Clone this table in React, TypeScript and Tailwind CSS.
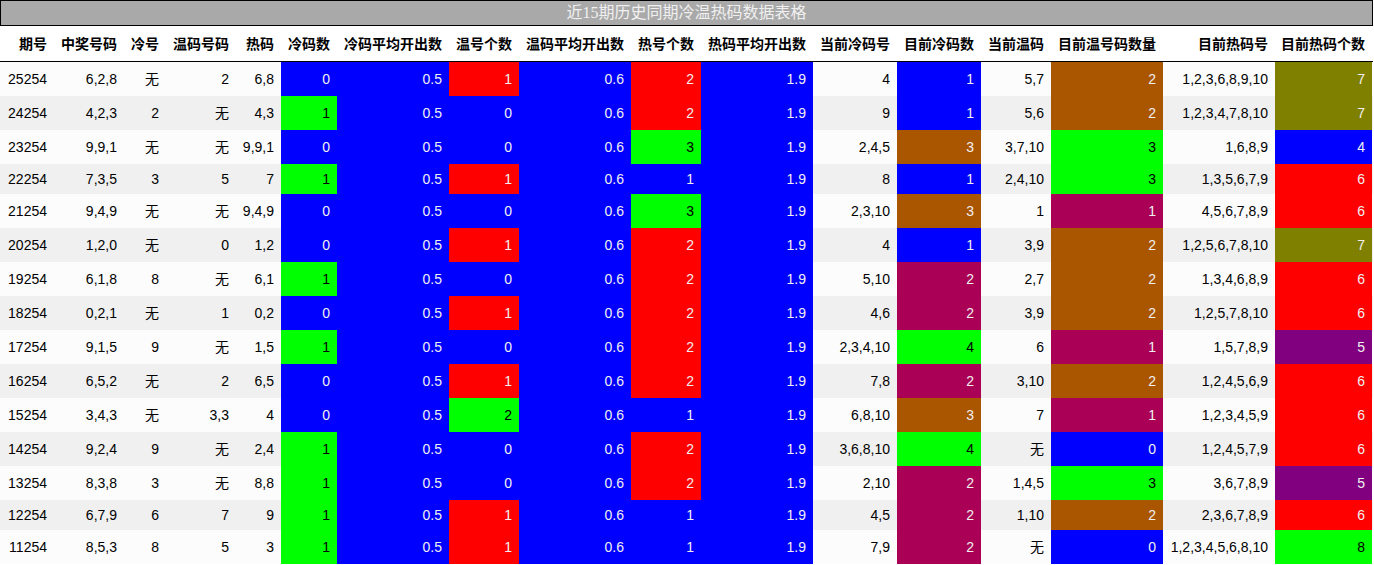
import React from "react";

const W = [54, 70, 42, 70, 45, 56, 112, 70, 112, 70, 112, 84, 84, 70, 112, 112, 97];

const HEAD = [
  "期号", "中奖号码", "冷号", "温码号码", "热码", "冷码数", "冷码平均开出数", "温号个数",
  "温码平均开出数", "热号个数", "热码平均开出数", "当前冷码号", "目前冷码数", "当前温码",
  "目前温号码数量", "目前热码号", "目前热码个数",
];

const B = "bg-[#0000ff] text-[#f0f0f0]";
const G = "bg-[#00ff00] text-black";
const R = "bg-[#ff0000] text-[#f0f0f0]";
const Br = "bg-[#aa5500] text-[#f0f0f0]";
const M = "bg-[#aa0055] text-[#f0f0f0]";
const O = "bg-[#808000] text-[#f0f0f0]";
const P = "bg-[#800080] text-[#f0f0f0]";

type Cell = [string, string?];

const ROWS: Cell[][] = [
  [["25254"], ["6,2,8"], ["无"], ["2"], ["6,8"], ["0", B], ["0.5", B], ["1", R], ["0.6", B], ["2", R], ["1.9", B], ["4"], ["1", B], ["5,7"], ["2", Br], ["1,2,3,6,8,9,10"], ["7", O]],
  [["24254"], ["4,2,3"], ["2"], ["无"], ["4,3"], ["1", G], ["0.5", B], ["0", B], ["0.6", B], ["2", R], ["1.9", B], ["9"], ["1", B], ["5,6"], ["2", Br], ["1,2,3,4,7,8,10"], ["7", O]],
  [["23254"], ["9,9,1"], ["无"], ["无"], ["9,9,1"], ["0", B], ["0.5", B], ["0", B], ["0.6", B], ["3", G], ["1.9", B], ["2,4,5"], ["3", Br], ["3,7,10"], ["3", G], ["1,6,8,9"], ["4", B]],
  [["22254"], ["7,3,5"], ["3"], ["5"], ["7"], ["1", G], ["0.5", B], ["1", R], ["0.6", B], ["1", B], ["1.9", B], ["8"], ["1", B], ["2,4,10"], ["3", G], ["1,3,5,6,7,9"], ["6", R]],
  [["21254"], ["9,4,9"], ["无"], ["无"], ["9,4,9"], ["0", B], ["0.5", B], ["0", B], ["0.6", B], ["3", G], ["1.9", B], ["2,3,10"], ["3", Br], ["1"], ["1", M], ["4,5,6,7,8,9"], ["6", R]],
  [["20254"], ["1,2,0"], ["无"], ["0"], ["1,2"], ["0", B], ["0.5", B], ["1", R], ["0.6", B], ["2", R], ["1.9", B], ["4"], ["1", B], ["3,9"], ["2", Br], ["1,2,5,6,7,8,10"], ["7", O]],
  [["19254"], ["6,1,8"], ["8"], ["无"], ["6,1"], ["1", G], ["0.5", B], ["0", B], ["0.6", B], ["2", R], ["1.9", B], ["5,10"], ["2", M], ["2,7"], ["2", Br], ["1,3,4,6,8,9"], ["6", R]],
  [["18254"], ["0,2,1"], ["无"], ["1"], ["0,2"], ["0", B], ["0.5", B], ["1", R], ["0.6", B], ["2", R], ["1.9", B], ["4,6"], ["2", M], ["3,9"], ["2", Br], ["1,2,5,7,8,10"], ["6", R]],
  [["17254"], ["9,1,5"], ["9"], ["无"], ["1,5"], ["1", G], ["0.5", B], ["0", B], ["0.6", B], ["2", R], ["1.9", B], ["2,3,4,10"], ["4", G], ["6"], ["1", M], ["1,5,7,8,9"], ["5", P]],
  [["16254"], ["6,5,2"], ["无"], ["2"], ["6,5"], ["0", B], ["0.5", B], ["1", R], ["0.6", B], ["2", R], ["1.9", B], ["7,8"], ["2", M], ["3,10"], ["2", Br], ["1,2,4,5,6,9"], ["6", R]],
  [["15254"], ["3,4,3"], ["无"], ["3,3"], ["4"], ["0", B], ["0.5", B], ["2", G], ["0.6", B], ["1", B], ["1.9", B], ["6,8,10"], ["3", Br], ["7"], ["1", M], ["1,2,3,4,5,9"], ["6", R]],
  [["14254"], ["9,2,4"], ["9"], ["无"], ["2,4"], ["1", G], ["0.5", B], ["0", B], ["0.6", B], ["2", R], ["1.9", B], ["3,6,8,10"], ["4", G], ["无"], ["0", B], ["1,2,4,5,7,9"], ["6", R]],
  [["13254"], ["8,3,8"], ["3"], ["无"], ["8,8"], ["1", G], ["0.5", B], ["0", B], ["0.6", B], ["2", R], ["1.9", B], ["2,10"], ["2", M], ["1,4,5"], ["3", G], ["3,6,7,8,9"], ["5", P]],
  [["12254"], ["6,7,9"], ["6"], ["7"], ["9"], ["1", G], ["0.5", B], ["1", R], ["0.6", B], ["1", B], ["1.9", B], ["4,5"], ["2", M], ["1,10"], ["2", Br], ["2,3,6,7,8,9"], ["6", R]],
  [["11254"], ["8,5,3"], ["8"], ["5"], ["3"], ["1", G], ["0.5", B], ["1", R], ["0.6", B], ["1", B], ["1.9", B], ["7,9"], ["2", M], ["无"], ["0", B], ["1,2,3,4,5,6,8,10"], ["8", G]],
];

export default function App() {
  return (
    <div className="w-[1374px] h-[565px] bg-white font-['Liberation_Sans','Noto_Sans_CJK_SC',sans-serif] text-[14px] text-black">
      <div className="w-[1373px] h-[26px] border border-black bg-[#a9a9a9] flex items-center justify-center text-[16px] text-[#f0f0f0] font-['Liberation_Serif','Noto_Sans_CJK_SC',serif] leading-none">
        近15期历史同期冷温热码数据表格
      </div>
      <div className="flex w-[1373px] h-[36px] border-b border-black bg-white font-bold">
        {HEAD.map((h, i) => (
          <div key={i} style={{ width: W[i] }} className="flex items-center justify-end pr-[7px] pt-[1px] whitespace-nowrap">
            {h}
          </div>
        ))}
      </div>
      {ROWS.map((row, r) => {
        const tall = row.some((c) => c[0] === "无");
        return (
          <div
            key={r}
            className={`flex w-[1373px] ${tall ? "h-[34px]" : "h-[30px]"} ${r % 2 === 0 ? "bg-[#fcfcfc]" : "bg-[#f0f0f0]"}`}
          >
            {row.map((c, i) => (
              <div
                key={i}
                style={{ width: W[i] }}
                className={`flex items-center justify-end pr-[7px] whitespace-nowrap ${c[1] ?? ""}`}
              >
                {c[0]}
              </div>
            ))}
          </div>
        );
      })}
    </div>
  );
}
